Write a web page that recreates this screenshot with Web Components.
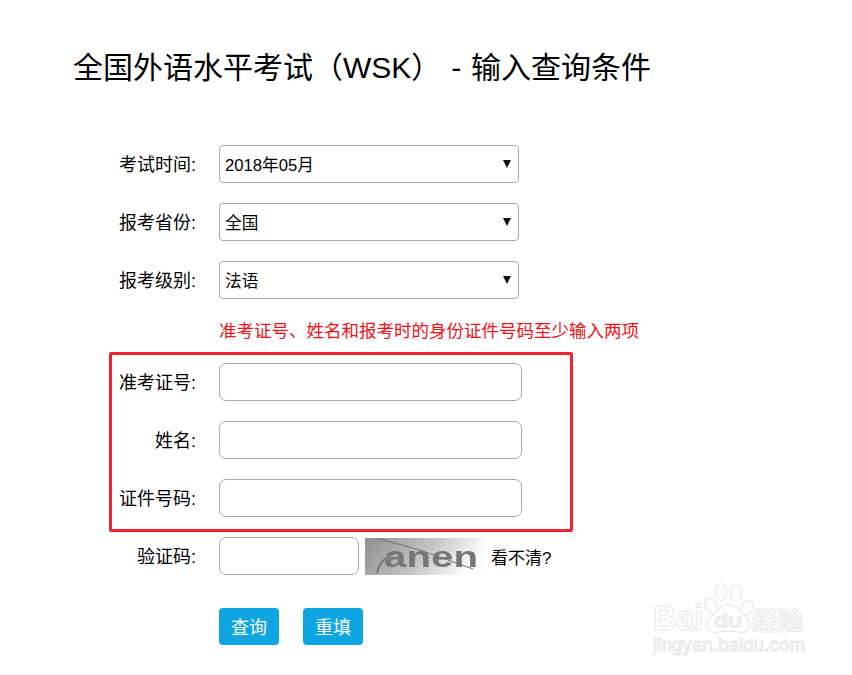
<!DOCTYPE html>
<html lang="zh-CN">
<head>
<meta charset="utf-8">
<title>全国外语水平考试（WSK）</title>
<style>
  html, body { margin: 0; padding: 0; background: #fff; }
  body { font-family: "Liberation Sans", "Noto Sans CJK SC", sans-serif; color: #000; }
</style>
</head>
<body>
<query-page>
  <span slot="title">全国外语水平考试（WSK） - 输入查询条件</span>

  <form-row label="考试时间:"><exam-select value="2018年05月"></exam-select></form-row>
  <form-row label="报考省份:"><exam-select value="全国"></exam-select></form-row>
  <form-row label="报考级别:"><exam-select value="法语"></exam-select></form-row>
  <form-row hint>准考证号、姓名和报考时的身份证件号码至少输入两项</form-row>

  <marked-group>
    <form-row label="准考证号:"><exam-input></exam-input></form-row>
    <form-row label="姓名:"><exam-input></exam-input></form-row>
    <form-row label="证件号码:"><exam-input></exam-input></form-row>
  </marked-group>

  <form-row label="验证码:">
    <exam-input short></exam-input>
    <captcha-image></captcha-image>
    <span style="font-size:17px">看不清?</span>
  </form-row>

  <button-row>
    <exam-button>查询</exam-button>
    <exam-button>重填</exam-button>
  </button-row>
</query-page>
<baidu-mark></baidu-mark>

<script>
class QueryPage extends HTMLElement {
  connectedCallback(){
    this.attachShadow({mode:'open'});
    this.shadowRoot.innerHTML = `
      <style>
        :host { display:block; width:852px; height:675px; box-sizing:border-box; overflow:hidden; }
        h1 {
          margin:0;
          padding:48px 0 0 73px;
          height:145px;
          box-sizing:border-box;
          font-size:30px;
          line-height:40px;
          font-weight:400;
          white-space:pre;
          word-spacing:1.5px;
        }
        .form { display:flex; flex-direction:column; gap:20px; }
      </style>
      <h1><slot name="title"></slot></h1>
      <div class="form"><slot></slot></div>
    `;
  }
}

class FormRow extends HTMLElement {
  connectedCallback(){
    const label = this.getAttribute('label') || '';
    this.attachShadow({mode:'open'});
    this.shadowRoot.innerHTML = `
      <style>
        :host {
          display:grid;
          grid-template-columns:196px 1fr;
          column-gap:23px;
          align-items:center;
          font-size:18px;
          min-height:38px;
        }
        :host([hint]) { min-height:24px; color:#f40f17; font-size:17.5px; line-height:24px; white-space:nowrap; }
        .label { text-align:right; white-space:nowrap; padding-bottom:2px; }
        .body { display:flex; align-items:center; }
      </style>
      <div class="label">${label}</div>
      <div class="body"><slot></slot></div>
    `;
  }
}

class ExamSelect extends HTMLElement {
  connectedCallback(){
    const value = this.getAttribute('value') || '';
    this.attachShadow({mode:'open'});
    this.shadowRoot.innerHTML = `
      <style>
        :host { display:block; width:300px; height:38px; }
        .box {
          display:flex;
          align-items:center;
          justify-content:space-between;
          width:100%;
          height:100%;
          box-sizing:border-box;
          border:1px solid #a9a9a9;
          border-radius:4px;
          padding:0 7px 0 5px;
          font-size:16.67px;
          background:#fff;
        }
        svg { display:block; margin-top:-1px; }
      </style>
      <div class="box">
        <span>${value}</span>
        <svg width="8" height="8" viewBox="0 0 8 8"><path d="M0 0h8L4 8z" fill="#111"/></svg>
      </div>
    `;
  }
}

class ExamInput extends HTMLElement {
  connectedCallback(){
    this.attachShadow({mode:'open'});
    this.shadowRoot.innerHTML = `
      <style>
        :host { display:block; width:303px; height:38px; }
        :host([short]) { width:140px; }
        input {
          display:block;
          width:100%;
          height:100%;
          box-sizing:border-box;
          border:1px solid #a9a9a9;
          border-radius:7px;
          background:#fff;
          padding:0 6px;
          font:inherit;
          outline:none;
        }
      </style>
      <input type="text">
    `;
  }
}

class CaptchaImage extends HTMLElement {
  connectedCallback(){
    this.attachShadow({mode:'open'});
    this.shadowRoot.innerHTML = `
      <style>
        :host { display:block; width:119px; height:37px; margin:0 7px 0 6px; }
        svg { display:block; }
        text { font-family:"Liberation Sans", sans-serif; font-weight:700; font-size:29px; fill:#777; filter:blur(.5px); }
        path { filter:blur(.4px); }
      </style>
      <svg width="119" height="37" viewBox="0 0 119 37">
        <defs>
          <linearGradient id="bg" x1="0" y1="0" x2="1" y2="0.25">
            <stop offset="0" stop-color="#8e8e8e"/>
            <stop offset="0.55" stop-color="#c2c2c2"/>
            <stop offset="1" stop-color="#fbfbfb"/>
          </linearGradient>
        </defs>
        <rect width="119" height="37" fill="url(#bg)"/>
        <path d="M12 0 L58 13 L108 31" stroke="#707070" stroke-width="1" fill="none"/>
        <path d="M12 35 Q15 20 32 14" stroke="#7a7a7a" stroke-width="2" fill="none"/>
        <text x="19" y="29" textLength="94" lengthAdjust="spacingAndGlyphs">anen</text>
      </svg>
    `;
  }
}

class MarkedGroup extends HTMLElement {
  connectedCallback(){
    this.attachShadow({mode:'open'});
    this.shadowRoot.innerHTML = `
      <style>
        :host { display:flex; flex-direction:column; gap:20px; position:relative; }
        /* red annotation drawn over the three rows */
        .mark {
          position:absolute;
          left:109px;
          top:-11px;
          width:464px;
          height:180px;
          box-sizing:border-box;
          border:3px solid #f2232f;
          border-radius:2px;
          pointer-events:none;
        }
      </style>
      <slot></slot>
      <div class="mark"></div>
    `;
  }
}

class ButtonRow extends HTMLElement {
  connectedCallback(){
    this.attachShadow({mode:'open'});
    this.shadowRoot.innerHTML = `
      <style>
        :host { display:flex; gap:24px; padding:13px 0 0 219px; }
      </style>
      <slot></slot>
    `;
  }
}

class ExamButton extends HTMLElement {
  connectedCallback(){
    this.attachShadow({mode:'open'});
    this.shadowRoot.innerHTML = `
      <style>
        :host { display:block; }
        button {
          display:block;
          width:60px;
          height:37px;
          padding:0 0 2px;
          border:0;
          border-radius:4px;
          background:#0ea5e3;
          color:#fff;
          font-family:inherit;
          font-size:18px;
        }
      </style>
      <button type="button"><slot></slot></button>
    `;
  }
}

class BaiduMark extends HTMLElement {
  connectedCallback(){
    this.attachShadow({mode:'open'});
    this.shadowRoot.innerHTML = `
      <style>
        :host { display:block; position:absolute; left:650px; top:580px; width:170px; height:80px; }
        svg { display:block; overflow:visible; }
        text { fill:#fff; stroke:#e6e6e6; stroke-width:1; }
        .paw { fill:#fff; stroke:#e8e8e8; stroke-width:1.2; }
      </style>
      <svg width="170" height="80" viewBox="0 0 170 80">
        <text x="3" y="50" font-family="Liberation Sans" font-weight="700" font-size="35" textLength="50" lengthAdjust="spacingAndGlyphs">Bai</text>
        <ellipse class="paw" cx="61" cy="26" rx="5.5" ry="8" transform="rotate(-25 61 26)"/>
        <ellipse class="paw" cx="71" cy="12" rx="5.5" ry="8.5"/>
        <ellipse class="paw" cx="86" cy="13" rx="5.5" ry="8.5"/>
        <ellipse class="paw" cx="97" cy="28" rx="5.5" ry="8" transform="rotate(25 97 28)"/>
        <path class="paw" d="M78 25 C68 25 66 33 60 38 C53 44 58 54 68 52 C74 51 82 51 88 52 C99 54 104 45 97 38 C91 33 88 25 78 25 Z"/>
        <text x="64" y="47" font-family="Liberation Sans" font-size="19" textLength="28" lengthAdjust="spacingAndGlyphs">du</text>
        <text x="102" y="50" font-family="Noto Sans CJK SC" font-weight="700" font-size="25" textLength="51" lengthAdjust="spacingAndGlyphs">经验</text>
        <text x="3" y="71" font-family="Liberation Sans" font-size="19" stroke-width=".8" textLength="152" lengthAdjust="spacingAndGlyphs">jingyan.baidu.com</text>
      </svg>
    `;
  }
}

customElements.define('query-page', QueryPage);
customElements.define('form-row', FormRow);
customElements.define('exam-select', ExamSelect);
customElements.define('exam-input', ExamInput);
customElements.define('captcha-image', CaptchaImage);
customElements.define('marked-group', MarkedGroup);
customElements.define('button-row', ButtonRow);
customElements.define('exam-button', ExamButton);
customElements.define('baidu-mark', BaiduMark);
</script>
</body>
</html>
